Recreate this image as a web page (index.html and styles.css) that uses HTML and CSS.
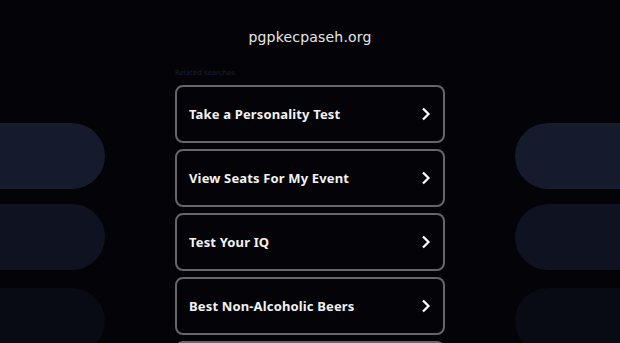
FILE: index.html
```html
<!DOCTYPE html>
<html lang="en">
<head>
    <meta charset="UTF-8">
    <meta name="viewport" content="width=device-width, initial-scale=1.0">
    <title>pgpkecpaseh.org</title>
    <link rel="stylesheet" href="styles.css">
</head>
<body>
    <div class="page">
        <div class="side side-left">
            <div class="pill p1"></div>
            <div class="pill p2"></div>
            <div class="pill p3"></div>
        </div>

        <main class="main">
            <h1 class="domain">pgpkecpaseh.org</h1>
            <div class="related">Related searches</div>
            <div class="links">
                <a class="link" href="#"><span>Take a Personality Test</span><svg class="chev" viewBox="0 0 10 14"><path d="M2 1.5 L7.5 7 L2 12.5"/></svg></a>
                <a class="link" href="#"><span>View Seats For My Event</span><svg class="chev" viewBox="0 0 10 14"><path d="M2 1.5 L7.5 7 L2 12.5"/></svg></a>
                <a class="link" href="#"><span>Test Your IQ</span><svg class="chev" viewBox="0 0 10 14"><path d="M2 1.5 L7.5 7 L2 12.5"/></svg></a>
                <a class="link" href="#"><span>Best Non-Alcoholic Beers</span><svg class="chev" viewBox="0 0 10 14"><path d="M2 1.5 L7.5 7 L2 12.5"/></svg></a>
                <a class="link" href="#"></a>
            </div>
        </main>

        <div class="side side-right">
            <div class="pill p1"></div>
            <div class="pill p2"></div>
            <div class="pill p3"></div>
        </div>
    </div>
</body>
</html>
```

FILE: styles.css
```css
* {
    margin: 0;
    padding: 0;
    box-sizing: border-box;
}

body {
    background: #040408;
    font-family: 'DejaVu Sans', Verdana, sans-serif;
    overflow: hidden;
    height: 343px;
}

.page {
    display: grid;
    grid-template-columns: 105px 1fr 105px;
    height: 100%;
}

.side {
    display: flex;
    flex-direction: column;
    padding-top: 123px;
    overflow: hidden;
}

.pill {
    height: 66px;
    flex-shrink: 0;
    margin-bottom: 15px;
}

.pill.p2 { margin-bottom: 18px; }

.side-left .pill { border-radius: 0 33px 33px 0; }
.side-right .pill { border-radius: 33px 0 0 33px; }

.p1 { background: #151a2d; }
.p2 { background: #0e1221; }
.p3 { background: #080a14; }

.main {
    display: flex;
    flex-direction: column;
    align-items: center;
    overflow: hidden;
}

.domain {
    margin-top: 28px;
    color: #e6e6e6;
    font-size: 14px;
    font-weight: normal;
    line-height: 18px;
    letter-spacing: 0.2px;
}

.related {
    width: 270px;
    margin-top: 23px;
    color: #1c1f2e;
    font-size: 7px;
    line-height: 9px;
}

.links {
    width: 270px;
    margin-top: 7px;
    display: flex;
    flex-direction: column;
    gap: 6px;
}

.link {
    height: 58px;
    flex-shrink: 0;
    display: flex;
    align-items: center;
    justify-content: space-between;
    padding: 0 12px 0 12px;
    border: 2px solid #66666a;
    border-radius: 8px;
    color: #f2f2f2;
    text-decoration: none;
    font-family: 'Noto Sans', sans-serif;
    font-size: 13px;
    font-weight: bold;
    letter-spacing: 0.15px;
}

.chev {
    width: 10px;
    height: 14px;
    fill: none;
    stroke: #ffffff;
    stroke-width: 2.2;
}
```
